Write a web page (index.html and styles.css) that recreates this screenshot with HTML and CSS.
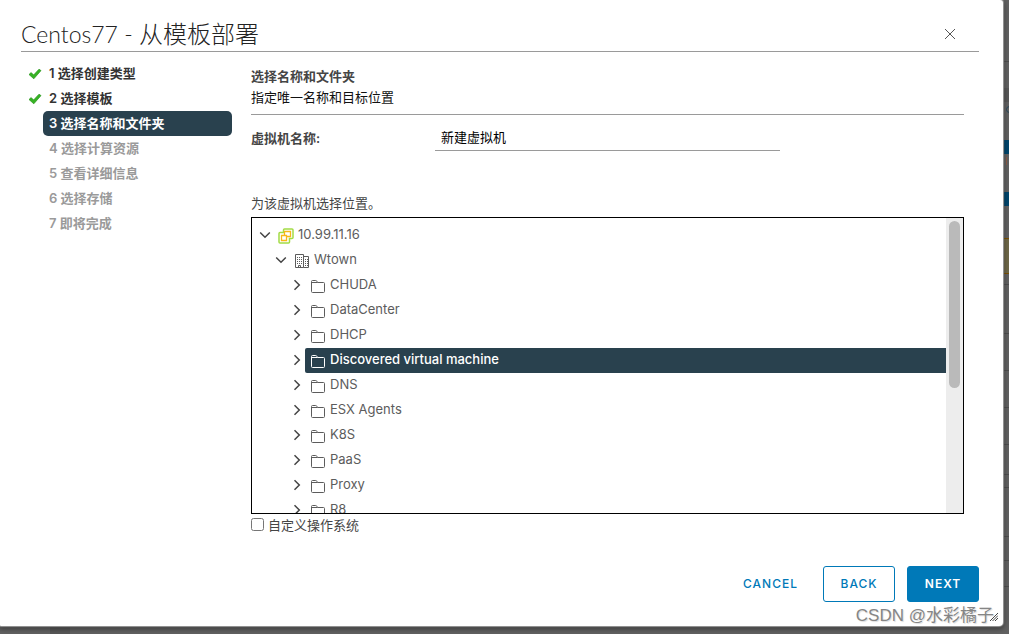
FILE: index.html
```html
<!DOCTYPE html>
<html lang="zh-CN">
<head>
<meta charset="utf-8">
<title>Centos77 - 从模板部署</title>
<link rel="stylesheet" href="styles.css">
</head>
<body>
<svg class="symbols" aria-hidden="true">
  <symbol id="check" viewBox="0 0 14 12"><path d="M1 6.5 3.2 4.6 5.6 7 11 1.2 13 2.6 5.8 10.8Z" fill="#36b324" stroke="#249416" stroke-width=".7"/></symbol>
  <symbol id="down" viewBox="0 0 12 12"><path d="M1.200 3.500 6 8.200l4.800-4.700" fill="none" stroke="currentColor" stroke-width="1.500"/></symbol>
  <symbol id="right" viewBox="0 0 12 12"><path d="M3.500 1.200 8.300 6l-4.800 4.800" fill="none" stroke="currentColor" stroke-width="1.500"/></symbol>
  <symbol id="folder" viewBox="0 0 16 16"><path d="M1.500 13.500v-10q0-1 1-1h3.200q.8 0 1.200.8l.6 1.200h6q1 0 1 1v8q0 1-1 1h-11q-1 0-1-1M1.500 4.500h6" fill="none" stroke="currentColor"/></symbol>
  <symbol id="center" viewBox="0 0 16 16"><g fill="none"><path d="M5.500 4.500V2q0-1 1-1H14q1 0 1 1v7.500q0 1-1 1h-2.500V14q0 1-1 1H2q-1 0-1-1V5.500q0-1 1-1h3.500Z" stroke="#a3dc45" stroke-width="1.500"/><path d="M6.500 7V3.500h6v5H9M3.500 7.500h5v5h-5Z" stroke="#f7b719" stroke-width="1.300"/></g></symbol>
  <symbol id="building" viewBox="0 0 16 16"><g fill="none" stroke="currentColor"><path d="M1.500 14.500v-13h8v13ZM9.500 3.500h5v11h-5M4.500 14.500v-2h2v2"/><path d="M3 4.500h5M3 6.500h5M3 8.500h5M3 10.500h5M11 6.500h3M11 8.500h3M11 10.500h3M11 12.500h3" stroke-dasharray="1 1"/></g></symbol>
</svg>

<div class="backdrop" aria-hidden="true">
  <i class="mark line m1"></i><i class="mark band m2"></i><i class="mark blue m3"></i><i class="mark blue m4"></i><i class="mark yellow m5"></i>
  <i class="mark line m6"></i><i class="mark line m7"></i><i class="mark line m8"></i><i class="mark line m9"></i><i class="mark line m10"></i><i class="mark line m11"></i><i class="mark line m12"></i>
  <i class="mark line m13"></i><i class="mark line m14"></i><i class="mark line m15"></i><i class="foot"></i>
  <i class="mark ring"></i><i class="mark tick"></i>
</div>

<main class="dialog">
  <header class="head">
    <h1 class="title"><span class="vm-name">Centos77 - </span>从模板部署</h1>
    <button class="close" type="button" aria-label="关闭"><svg viewBox="0 0 12 12"><path d="m1 1 10 10M11 1 1 11" stroke="currentColor" fill="none"/></svg></button>
  </header>
  <div class="body">
    <nav class="steps">
      <ol class="step-list">
        <li class="step"><svg class="check"><use href="#check"/></svg><span class="step-name">1 选择创建类型</span></li>
        <li class="step"><svg class="check"><use href="#check"/></svg><span class="step-name">2 选择模板</span></li>
        <li class="step current"><span class="step-name">3 选择名称和文件夹</span></li>
        <li class="step todo"><span class="step-name">4 选择计算资源</span></li>
        <li class="step todo"><span class="step-name">5 查看详细信息</span></li>
        <li class="step todo"><span class="step-name">6 选择存储</span></li>
        <li class="step todo"><span class="step-name">7 即将完成</span></li>
      </ol>
    </nav>
    <section class="content">
      <div class="intro">
        <h2 class="subtitle">选择名称和文件夹</h2>
        <p class="hint">指定唯一名称和目标位置</p>
      </div>
      <div class="field">
        <label class="label" for="vm">虚拟机名称:</label>
        <input class="input" id="vm" type="text" value="新建虚拟机">
      </div>
      <p class="prompt">为该虚拟机选择位置。</p>
      <div class="tree">
        <ul class="nodes">
          <li class="node root"><svg class="arrow"><use href="#down"/></svg><span class="item"><svg class="icon"><use href="#center"/></svg><span class="name">10.99.11.16</span></span></li>
          <li class="node dc"><svg class="arrow"><use href="#down"/></svg><span class="item"><svg class="icon"><use href="#building"/></svg><span class="name">Wtown</span></span></li>
          <li class="node"><svg class="arrow"><use href="#right"/></svg><span class="item"><svg class="icon"><use href="#folder"/></svg><span class="name">CHUDA</span></span></li>
          <li class="node"><svg class="arrow"><use href="#right"/></svg><span class="item"><svg class="icon"><use href="#folder"/></svg><span class="name">DataCenter</span></span></li>
          <li class="node"><svg class="arrow"><use href="#right"/></svg><span class="item"><svg class="icon"><use href="#folder"/></svg><span class="name">DHCP</span></span></li>
          <li class="node"><svg class="arrow"><use href="#right"/></svg><span class="item selected"><svg class="icon"><use href="#folder"/></svg><span class="name">Discovered virtual machine</span></span></li>
          <li class="node"><svg class="arrow"><use href="#right"/></svg><span class="item"><svg class="icon"><use href="#folder"/></svg><span class="name">DNS</span></span></li>
          <li class="node"><svg class="arrow"><use href="#right"/></svg><span class="item"><svg class="icon"><use href="#folder"/></svg><span class="name">ESX Agents</span></span></li>
          <li class="node"><svg class="arrow"><use href="#right"/></svg><span class="item"><svg class="icon"><use href="#folder"/></svg><span class="name">K8S</span></span></li>
          <li class="node"><svg class="arrow"><use href="#right"/></svg><span class="item"><svg class="icon"><use href="#folder"/></svg><span class="name">PaaS</span></span></li>
          <li class="node"><svg class="arrow"><use href="#right"/></svg><span class="item"><svg class="icon"><use href="#folder"/></svg><span class="name">Proxy</span></span></li>
          <li class="node"><svg class="arrow"><use href="#right"/></svg><span class="item"><svg class="icon"><use href="#folder"/></svg><span class="name">R8</span></span></li>
        </ul>
        <div class="track"><div class="thumb"></div></div>
      </div>
      <label class="option"><input class="box" type="checkbox">自定义操作系统</label>
    </section>
  </div>
  <footer class="actions">
    <button class="btn link" type="button">CANCEL</button>
    <button class="btn outline" type="button">BACK</button>
    <button class="btn primary" type="button">NEXT</button>
  </footer>
  <svg class="grip" viewBox="0 0 8 8" aria-hidden="true"><path d="M0 8 8 0M2.500 8 8 2.500M5 8l3-3" stroke="#444" fill="none"/></svg>
  <span class="watermark">CSDN @水彩橘子</span>
</main>
</body>
</html>
```
FILE: styles.css
```css
* { box-sizing: border-box; }
body {
  margin: 0;
  min-height: 100vh;
  padding: 0 6px 8px 0;
  display: flex;
  background: #616161;
  color: #454545;
  font: 13px/20px Inter, "Noto Sans CJK SC", sans-serif;
  overflow: hidden;
}
h1, h2, p, ol, ul { margin: 0; padding: 0; }
ol, ul { list-style: none; }
svg { display: block; flex: none; }
button, input { font: inherit; }
.symbols { position: absolute; width: 0; height: 0; }

.backdrop { position: absolute; inset: 0; overflow: hidden; }
.mark { position: absolute; right: 0; width: 5px; height: 1px; background: #4d4d4d; }
.m1 { top: 61px; }
.band { height: 14px; background: #575757; }
.m2 { top: 88px; }
.blue { height: 14px; background: #00456b; }
.m3 { top: 140px; }
.m4 { top: 192px; }
.yellow { height: 36px; background: #6d6747; border: solid #7b5000; border-width: 1px 0; }
.m5 { top: 238px; }
.m6 { top: 284px; }
.m7 { top: 333px; }
.m8 { top: 370px; }
.m9 { top: 407px; }
.m10 { top: 444px; }
.m11 { top: 474px; }
.m12 { top: 487px; }
.m13 { top: 536px; }
.m14 { top: 560px; }
.m15 { top: 586px; }
.ring { top: 106px; right: -4px; width: 7px; height: 7px; border: 1px solid #29495c; border-radius: 4px; background: none; }
.tick { top: 157px; right: 2px; width: 1px; height: 8px; background: #8a5b48; }
.foot { position: absolute; left: 50px; bottom: 0; width: 20px; height: 7px; background: #565656; }

.dialog {
  position: relative;
  flex: 1;
  min-width: 0;
  display: flex;
  flex-direction: column;
  padding: 17px 24px 24px 21px;
  background: #fff;
  border-radius: 0 3px 4px 1px;
  box-shadow: 0 0 1px 1px #999, 0 2px 5px 1px rgba(0, 0, 0, .4);
}
.head {
  display: flex;
  justify-content: space-between;
  align-items: center;
  height: 35px;
  padding-right: 23px;
  border-bottom: 1px solid #9a9a9a;
}
.title { color: #222; font: 300 24px/32px Lato, "Noto Sans CJK SC", sans-serif; }
.vm-name { font-size: 23px; white-space: pre; }
.close { width: 12px; height: 12px; padding: 0; border: 0; background: none; color: #555; }

.body { display: flex; flex: 1; gap: 19px; }
.steps { flex: 0 0 211px; padding-top: 9px; }
.step { display: flex; align-items: center; height: 25px; padding-left: 22px; font-weight: 600; color: #333; }
.step-name { flex: 1; padding-left: 6px; line-height: 25px; }
.check { width: 14px; height: 12px; margin-left: -15px; margin-right: 1px; }
.current .step-name { background: #29414e; color: #fff; border-radius: 5px; }
.todo { color: #9a9a9a; }

.content { flex: 1; min-width: 0; padding: 13px 15px 0 0; }
.intro { padding-bottom: 6px; border-bottom: 1px solid #9a9a9a; }
.subtitle { font-size: 13px; font-weight: 600; line-height: 22px; }
.hint { line-height: 21px; color: #111; }
.field { display: flex; align-items: center; margin-top: 10px; margin-bottom: 41px; }
.label { flex: 0 0 184px; font-weight: 600; }
.input { flex: 0 1 345px; min-width: 0; height: 26px; padding: 0 6px 2px; border: 0; border-bottom: 1px solid #9a9a9a; background: none; color: #000; }
.prompt { line-height: 22px; padding-bottom: 3px; }
.tree { display: flex; height: 297px; border: 1px solid #000; overflow: hidden; }
.nodes { flex: 1; padding-top: 5px; }
.node { display: flex; align-items: center; height: 25px; padding-left: 39px; color: #5c5c5c; }
.root { padding-left: 7px; }
.dc { padding-left: 23px; }
.arrow { width: 12px; height: 12px; margin-bottom: 2px; color: #444; }
.item { display: flex; align-items: center; gap: 4px; flex: 1; height: 25px; margin-left: 2px; padding-left: 5px; }
.icon { width: 16px; height: 16px; }
.name { padding-bottom: 3px; }
.selected { background: #29414e; color: #fff; font-weight: 500; border-radius: 2px 0 0 2px; }
.track { flex: 0 0 17px; padding: 3px; background: #ededed; }
.thumb { height: 167px; border-radius: 6px; background: #bababa; }
.option { display: flex; align-items: center; gap: 4px; line-height: 22px; }
.box { width: 13px; height: 13px; margin: 0 0 2px; }

.actions { display: flex; justify-content: flex-end; gap: 12px; }
.btn { min-width: 72px; height: 36px; padding: 0 12px; border: 1px solid #0079b8; border-radius: 3px; background: #fff; color: #0079b8; font-size: 12px; font-weight: 500; letter-spacing: 1px; }
.link { border-color: transparent; }
.primary { background: #0079b8; color: #fff; font-weight: 600; }
.grip { position: absolute; right: 5px; bottom: 5px; width: 8px; height: 8px; }
.watermark { position: absolute; right: 9px; bottom: -2px; color: #858585; font: 17px/24px "Liberation Sans", "Noto Sans CJK SC", sans-serif; text-shadow: 1px 1px 1px #ddd; }
```
